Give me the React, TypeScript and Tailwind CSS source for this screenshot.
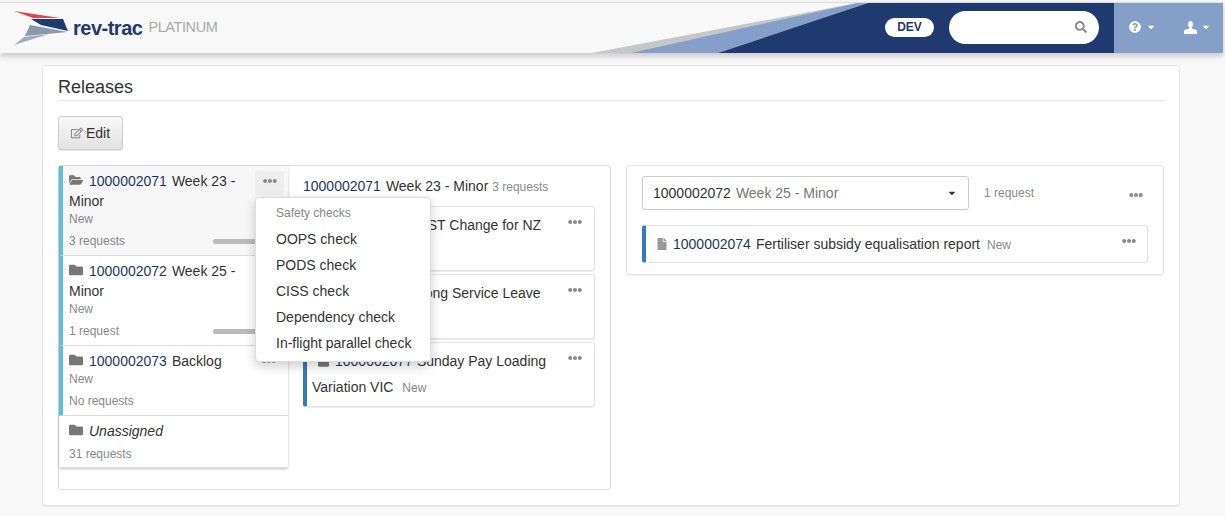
import React from 'react';
import { FaFolder, FaFolderOpen, FaFile, FaQuestionCircle, FaSearch, FaRegEdit, FaEllipsisH, FaCaretDown } from 'react-icons/fa';

const CHECKS = ['OOPS check', 'PODS check', 'CISS check', 'Dependency check', 'In-flight parallel check'];

function Dots({ className }: { className?: string }) {
  return <FaEllipsisH size={14} className={`text-[#888] ${className ?? ''}`} />;
}

function Logo() {
  return (
    <svg width="56" height="38" viewBox="0 0 56 38" className="shrink-0">
      <polygon points="0,2 46,9 19,9" fill="#e0454c" />
      <polygon points="17,10 49,10 54,22 27,16" fill="#1f3a6e" />
      <polygon points="16,16 54,23 11,27" fill="#8d98ad" />
      <polygon points="10,28 35,25 0,36" fill="#a3acbd" />
    </svg>
  );
}

function UserIcon() {
  return (
    <svg width="13" height="13" viewBox="0 0 13 13" fill="currentColor">
      <path d="M4 3.2C4 1.4 5.1 0 6.5 0S9 1.4 9 3.2c0 1.3-.6 2.5-1.3 3.1v1.2c1.7.5 5.3 1.2 5.3 2.7V13H0v-2.800c0-1.500 3.600-2.200 5.300-2.700V6.300C4.600 5.700 4 4.500 4 3.200z" />
    </svg>
  );
}

function Release({ id, title, count, open, bar, accent = true }: { id?: string; title: string; count: string; open?: boolean; bar?: boolean; accent?: boolean }) {
  const Icon = open ? FaFolderOpen : FaFolder;
  return (
    <div className={`relative border-b border-[#ddd] pr-6 pt-[5px] text-[14px] leading-[20px] ${accent ? 'border-l-4 border-l-[#5bc0de] pl-[6px]' : 'pl-[10px]'} ${open ? 'bg-[#f7f7f7]' : 'bg-white'}`}>
      <div className="text-[#333]">
        <Icon size={14} className="mr-[6px] inline-block align-[-1px] text-[#777]" />
        {id && <span className="mr-[5px] text-[#1c3664]">{id}</span>}
        {id ? title : <i>{title}</i>}
      </div>
      {id && <div className="text-[12px] leading-[16px] text-[#888]">New</div>}
      <div className={`text-[12px] leading-[16px] text-[#888] ${id ? 'pb-[6px] pt-[6px]' : 'pb-[5px] pt-[5px]'}`}>{count}</div>
      {bar && <div className="absolute left-[150px] top-[73px] h-[5px] w-[70px] rounded-full bg-[#bbb]" />}
    </div>
  );
}

function RequestCard({ children }: { children: React.ReactNode }) {
  return (
    <div className="relative h-[65px] rounded-[3px] border border-[#e3e3e3] border-l-4 border-l-[#337ab7] bg-white pl-[5px] pr-10 pt-[5px] text-[14px] leading-[26px] text-[#333] shadow-[0_1px_1px_rgba(0,0,0,0.08)]">
      {children}
      <Dots className="absolute right-[12px] top-[8px]" />
    </div>
  );
}

export default function App() {
  return (
    <div className="h-[516px] w-[1225px] overflow-hidden bg-[#f8f8f8] font-['Liberation_Sans',Arial,sans-serif]">
      <header className="mr-[2px] mt-[2px] flex h-[51px] items-stretch border-t border-[#ddd] bg-[#f8f8f8] shadow-[0_3px_6px_rgba(0,0,0,0.2)]">
        <div className="ml-[14px] flex items-center">
          <Logo />
          <span className="ml-[3px] text-[20px] font-bold tracking-[-0.5px] text-[#1f3a6e]">rev-trac</span>
          <span className="ml-[6px] text-[14.5px] tracking-[-0.4px] text-[#aaa]">PLATINUM</span>
        </div>
        <svg width="276" height="50" viewBox="0 0 276 50" preserveAspectRatio="none" className="ml-auto shrink-0">
          <polygon points="0,50 265,0 276,0 126,50" fill="#c4c6c7" />
          <polygon points="39,50 265,0 276,0 126,50" fill="#85a0c8" />
          <polygon points="126,50 276,0 276,50" fill="#1f3a6e" />
        </svg>
        <div className="flex w-[246px] items-center justify-end bg-[#1f3a6e] pb-[2px] pr-[15px]">
          <span className="flex h-[19px] w-[49px] items-center justify-center rounded-full bg-white text-[12px] font-bold text-[#1f3a6e]">DEV</span>
          <div className="ml-[15px] flex h-[33px] w-[150px] items-center justify-end rounded-full bg-white pr-3">
            <FaSearch size={12} className="text-[#888]" />
          </div>
        </div>
        <div className="flex w-[109px] items-center bg-[#85a0c8] pb-[2px] pl-[15px] text-white">
          <FaQuestionCircle size={12} />
          <FaCaretDown size={10} className="ml-[5px] mr-[28px]" />
          <UserIcon />
          <FaCaretDown size={10} className="ml-[4px]" />
        </div>
      </header>

      <main className="ml-[42px] mt-3 h-[441px] w-[1138px] rounded-[3px] border border-[#e3e3e3] bg-white pl-[15px] pr-[14px] pt-[11px] shadow-[0_1px_1px_rgba(0,0,0,0.05)]">
        <h1 className="border-b border-[#e8e8e8] pb-[2px] text-[18px] leading-[21px] text-[#333]">Releases</h1>
        <button className="mt-[15px] flex h-[34px] w-[65px] items-center justify-center rounded-[3px] border border-[#ccc] bg-gradient-to-b from-[#f8f8f8] to-[#e2e2e2] text-[14px] text-[#333] shadow-[0_1px_1px_rgba(0,0,0,0.1)]">
          <FaRegEdit size={12} className="mr-[3px] text-[#888]" />Edit
        </button>

        <div className="mt-[15px] flex items-start">
          <div className="relative flex h-[325px] w-[553px] items-start rounded-[3px] border border-[#ddd]">
            <div className="w-[229px] rounded-[3px] bg-white shadow-[0_1px_3px_rgba(0,0,0,0.25)]">
              <Release id="1000002071" title="Week 23 - Minor" count="3 requests" open bar />
              <Release id="1000002072" title="Week 25 - Minor" count="1 request" bar />
              <Release id="1000002073" title="Backlog" count="No requests" />
              <Release title="Unassigned" count="31 requests" accent={false} />
            </div>
            <div className="ml-[15px] flex w-[292px] flex-col gap-[3px]">
              <div className="pb-[3px] pt-[7px] text-[14px] leading-[26px] text-[#333]">
                <span className="mr-[5px] text-[#1c3664]">1000002071</span>Week 23 - Minor <span className="text-[12px] text-[#888]">3 requests</span>
              </div>
              <RequestCard><FaFolder size={11} className="ml-[6px] mr-[6px] inline-block text-[#777]" /><span className="mr-[4px] text-[#1c3664]">1000002075</span>GST Change for NZ</RequestCard>
              <RequestCard><FaFolder size={11} className="ml-[6px] mr-[6px] inline-block text-[#777]" /><span className="mr-[4px] text-[#1c3664]">1000002076</span>Long Service Leave</RequestCard>
              <RequestCard><FaFolder size={11} className="ml-[6px] mr-[6px] inline-block text-[#777]" /><span className="mr-[4px] text-[#1c3664]">1000002077</span>Sunday Pay Loading Variation VIC <span className="ml-[5px] text-[12px] text-[#888]">New</span></RequestCard>
            </div>

            {/* row menu, open on the first release */}
            <div className="absolute left-[196px] top-[5px] flex h-[24px] w-[29px] items-start justify-center rounded-[3px] bg-[#eee] pt-[3px]"><Dots /></div>
            <Dots className="absolute left-[203px] top-[188px]" />
            <div className="absolute left-[196px] top-[31px] h-[165px] w-[176px] rounded-[4px] border border-[#ddd] bg-white py-[5px] shadow-[0_4px_12px_rgba(0,0,0,0.2)]">
              <div className="mb-[3px] pl-5 text-[12px] leading-[20px] text-[#888]">Safety checks</div>
              {CHECKS.map(c => (
                <div key={c} className="pl-5 text-[14px] leading-[26px] text-[#333]">{c}</div>
              ))}
            </div>
          </div>

          <div className="ml-[15px] h-[110px] w-[538px] rounded-[3px] border border-[#e3e3e3] p-[15px] pt-[10px] shadow-[0_1px_1px_rgba(0,0,0,0.05)]">
            <div className="flex items-center">
              <div className="flex h-[34px] w-[327px] items-center justify-between rounded-[3px] border border-[#ccc] pl-[10px] pr-[11px] text-[14px]">
                <span><span className="mr-[5px] text-[#333]">1000002072</span><span className="text-[#777]">Week 25 - Minor</span></span>
                <FaCaretDown size={10} className="text-[#333]" />
              </div>
              <span className="ml-[15px] text-[12px] text-[#888]">1 request</span>
              <Dots className="ml-auto mr-[5px] mt-[4px]" />
            </div>
            <div className="relative mt-[15px] h-[38px] w-[506px] rounded-[3px] border border-[#e3e3e3] border-l-4 border-l-[#337ab7] bg-white pl-[10px] text-[14px] leading-[36px] text-[#333]">
              <FaFile size={12} className="mr-[5px] inline-block align-[-1px] text-[#999]" />
              <span className="mr-[5px] text-[#1c3664]">1000002074</span>Fertiliser subsidy equalisation report
              <span className="ml-[7px] text-[12px] text-[#888]">New</span>
              <Dots className="absolute right-[11px] top-[8px]" />
            </div>
          </div>
        </div>
      </main>
    </div>
  );
}
